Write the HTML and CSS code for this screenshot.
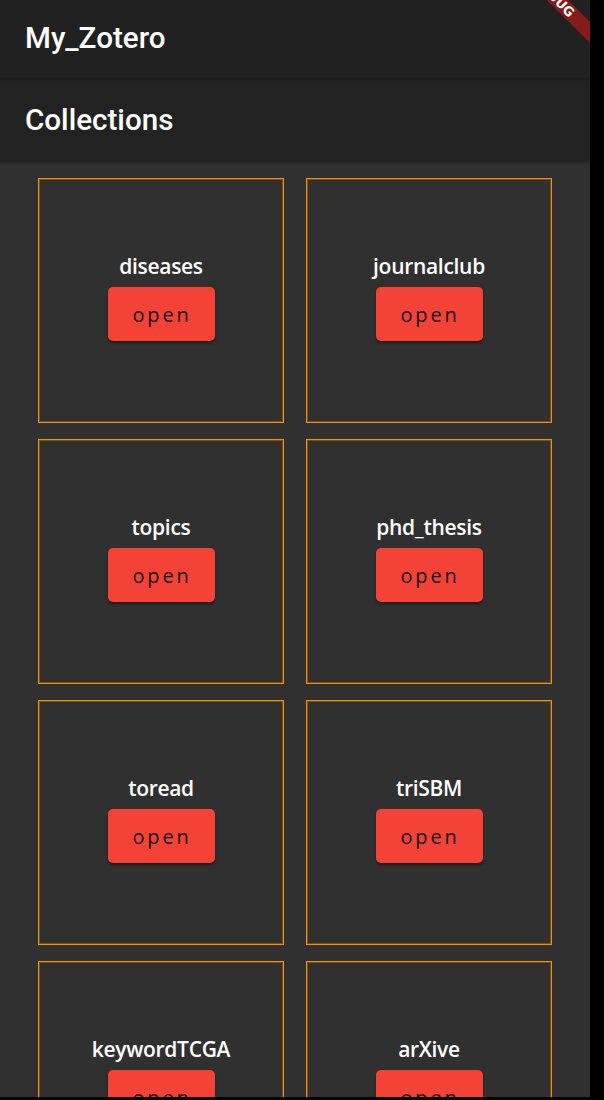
FILE: index.html
```html
<!DOCTYPE html>
<html>
<head>
<meta charset="utf-8">
<link rel="stylesheet" href="styles.css">
</head>
<body>
<div class="app">
  <header class="appbar top"><span class="title">My_Zotero</span></header>
  <header class="appbar sub"><span class="title">Collections</span></header>
  <main class="grid">
    <div class="card"><div class="name">diseases</div><button class="open">open</button></div>
    <div class="card"><div class="name">journalclub</div><button class="open">open</button></div>
    <div class="card"><div class="name">topics</div><button class="open">open</button></div>
    <div class="card"><div class="name">phd_thesis</div><button class="open">open</button></div>
    <div class="card"><div class="name">toread</div><button class="open">open</button></div>
    <div class="card"><div class="name">triSBM</div><button class="open">open</button></div>
    <div class="card"><div class="name">keywordTCGA</div><button class="open">open</button></div>
    <div class="card"><div class="name">arXive</div><button class="open">open</button></div>
  </main>
  <div class="banner"><span>DEBUG</span></div>
</div>
</body>
</html>
```
FILE: styles.css
```css
html, body {
  margin: 0;
  padding: 0;
  background: #000;
}
.app {
  position: relative;
  width: 590px;
  height: 1097px;
  overflow: hidden;
  background: #303030;
  font-family: "Open Sans", "Noto Sans", sans-serif;
}
.appbar {
  display: flex;
  align-items: center;
  padding-left: 25px;
  background: #212121;
  color: #fff;
  position: relative;
}
.appbar .title {
  font-family: Roboto, "Liberation Sans", sans-serif;
  font-weight: 500;
  font-size: 29.6px;
  line-height: 30px;
}
.appbar.top {
  height: 78px;
  z-index: 2;
  box-shadow: 0 1px 3px rgba(0,0,0,0.35);
}
.appbar.top .title {
  margin-top: -2px;
}
.appbar.sub {
  height: 84px;
  background: #222222;
  z-index: 1;
  box-shadow: 0 1px 3px rgba(0,0,0,0.3);
}
.grid {
  display: grid;
  grid-template-columns: 246px 246px;
  grid-auto-rows: 245px;
  column-gap: 22px;
  row-gap: 16px;
  padding: 16px 38px;
}
.card {
  box-sizing: border-box;
  border: 1px solid #f59000;
  box-shadow: inset 0 0 0 1px rgba(240, 140, 0, 0.35);
  display: flex;
  flex-direction: column;
  align-items: center;
  justify-content: center;
  padding-bottom: 8px;
}
.name {
  color: #fff;
  font-size: 21px;
  font-weight: 600;
  line-height: 28px;
  letter-spacing: -0.3px;
}
.open {
  margin-top: 7px;
  width: 107px;
  height: 54px;
  border: none;
  border-radius: 5px;
  background: #f44336;
  color: #111;
  font-family: "Open Sans", "Noto Sans", sans-serif;
  font-size: 20px;
  letter-spacing: 2.8px;
  padding: 0 0 0 2px;
  box-shadow: 0 2px 3px rgba(0,0,0,0.45);
}
.banner {
  position: absolute;
  z-index: 10;
  left: 490px;
  top: 25px;
  width: 200px;
  height: 15px;
  background: #861b1b;
  transform: rotate(45deg);
  display: flex;
  justify-content: flex-end;
  align-items: center;
  box-sizing: border-box;
}
.banner span {
  margin-right: 125px;
  color: #fff;
  font-family: "DejaVu Sans", sans-serif;
  font-weight: bold;
  font-size: 13px;
  line-height: 15px;
}
```
